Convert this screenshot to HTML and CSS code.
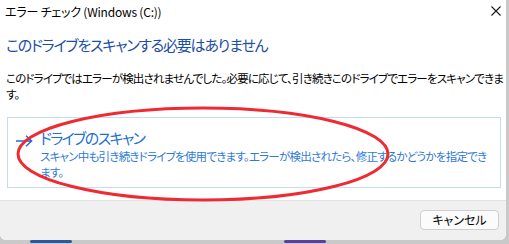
FILE: index.html
```html
<!DOCTYPE html>
<html lang="ja">
<head>
<meta charset="utf-8">
<link rel="stylesheet" href="styles.css">
</head>
<body>
<div class="screen">
  <div class="dialog">
    <div class="titlebar">
      <span class="title">エラー チェック (Windows (C:))</span>
      <svg class="close" width="10" height="10" viewBox="0 0 10 10"><path d="M0.5 0.5 L9.5 9.5 M9.5 0.5 L0.5 9.5" stroke="#1a1a1a" stroke-width="1.1" fill="none"/></svg>
    </div>
    <div class="content">
      <h1 class="heading">このドライブをスキャンする必要はありません</h1>
      <p class="body">このドライブではエラーが検出されませんでした。必要に応じて、引き続きこのドライブでエラーをスキャンできます。</p>
      <div class="cmdlink">
        <svg class="arrow" width="17" height="12" viewBox="0 0 17 12"><path d="M0 6 H15.5 M10 0.8 L15.6 6 L10 11.2" stroke="#1f6fd1" stroke-width="1.5" fill="none"/></svg>
        <div class="cmdtext">
          <div class="cmdtitle">ドライブのスキャン</div>
          <div class="cmddesc">スキャン中も引き続きドライブを使用できます。エラーが検出されたら、修正するかどうかを指定できます。</div>
        </div>
      </div>
    </div>
    <div class="footer">
      <button class="btn">キャンセル</button>
    </div>
  </div>
  <div class="taskbar">
    <span class="ind ind-blue"></span>
    <span class="ind ind-purple"></span>
  </div>
  <svg class="annot" width="509" height="244" viewBox="0 0 509 244"><ellipse cx="203" cy="154" rx="185" ry="46" stroke="#ee2b33" stroke-width="3" fill="none"/></svg>
</div>
</body>
</html>
```

FILE: styles.css
```css
html, body {
  margin: 0;
  padding: 0;
}
body {
  width: 509px;
  height: 244px;
  overflow: hidden;
  background: #c9c9c9;
  font-family: "Noto Sans CJK JP", "Noto Sans", sans-serif;
  font-feature-settings: "palt";
}
.screen {
  position: relative;
  width: 509px;
  height: 244px;
}
.dialog {
  width: 506px;
  height: 240px;
  background: #ffffff;
  border-radius: 0 0 6px 6px;
  display: flex;
  flex-direction: column;
  overflow: hidden;
}
.titlebar {
  height: 24px;
  display: flex;
  align-items: center;
  justify-content: space-between;
  padding: 0 5px 0 5px;
}
.title {
  font-size: 12px;
  color: #000;
  line-height: 14px;
  letter-spacing: -0.2px;
}
.close {
  display: block;
  margin-top: -3px;
}
.content {
  flex: 1;
  padding: 10px 3px 0 6px;
}
.heading {
  margin: 0;
  font-size: 15px;
  font-weight: normal;
  color: #1d4ea6;
  line-height: 22px;
  letter-spacing: -1.2px;
}
.body {
  margin: 14px 0 0 0;
  font-size: 11.5px;
  line-height: 16px;
  color: #000;
  letter-spacing: -0.82px;
}
.cmdlink {
  margin: 15px 0 0 1px;
  width: 492px;
  height: 69px;
  border: 1px solid #c4dcf2;
  display: flex;
  align-items: flex-start;
}
.arrow {
  display: block;
  margin: 17px 0 0 8px;
  flex: none;
}
.cmdtext {
  margin: 10px 0 0 7px;
}
.cmdtitle {
  font-size: 15px;
  line-height: 20px;
  color: #1f6fd1;
  letter-spacing: -1.6px;
}
.cmddesc {
  font-size: 11.5px;
  line-height: 16px;
  color: #2f7bd6;
  letter-spacing: -0.75px;
  padding-right: 12px;
}
.footer {
  height: 40px;
  border-top: 1px solid #e2e2e2;
  background: #f0f0f0;
  display: flex;
  justify-content: flex-end;
  align-items: flex-start;
  padding: 9px 7px 0 0;
  box-sizing: border-box;
  flex: none;
}
.btn {
  width: 79px;
  height: 20px;
  border: 1px solid #cfcfcf;
  border-radius: 4px;
  background: #fbfbfb;
  font-family: "Noto Sans CJK JP", "Noto Sans", sans-serif;
  font-feature-settings: "palt";
  font-size: 12px;
  line-height: 16px;
  color: #000;
  padding: 0;
}
.taskbar {
  height: 4px;
  position: relative;
}
.ind {
  position: absolute;
  top: 0;
  height: 3px;
  border-radius: 2px;
}
.ind-blue {
  left: 30px;
  width: 42px;
  background: #2a5a9e;
}
.ind-purple {
  left: 284px;
  width: 42px;
  background: #5a3ea0;
}
.annot {
  position: absolute;
  left: 0;
  top: 0;
  pointer-events: none;
}
```
